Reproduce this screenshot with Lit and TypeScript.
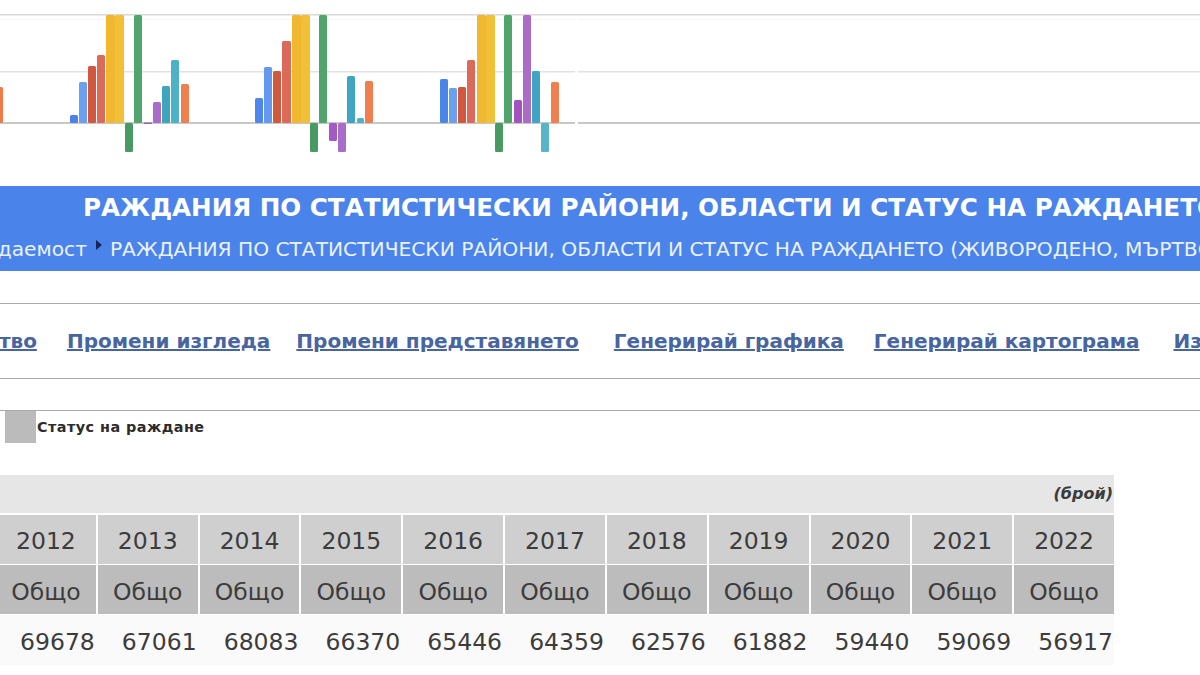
import { LitElement, css, html, svg } from "lit";
import { customElement } from "lit/decorators.js";

const BASE = 123;
const TOP = 15;
const BOTTOM = 152;

// x, width, value end (y), colour. Bars go from the baseline to y.
const BARS: [number, number, number, string][] = [
  [-6, 9, 87, "#f07a4a"],

  [70, 8, 115, "#4f7fe8"],
  [79, 8, 82, "#6ba0f0"],
  [88, 8, 66, "#d2573f"],
  [97, 8, 55, "#dc6a5a"],
  [106, 9, TOP, "#f0b82e"],
  [115, 9, TOP, "#f2c037"],
  [125, 8, BOTTOM, "#489a62"],
  [134, 8, TOP, "#4fa56c"],
  [153, 8, 102, "#a96cc8"],
  [162, 8, 86, "#3ea6bc"],
  [171, 8, 60, "#4db2c6"],
  [181, 8, 84, "#f07f50"],

  [255, 8, 98, "#4f86ea"],
  [264, 8, 67, "#6399ee"],
  [273, 8, 71, "#d2573f"],
  [282, 9, 41, "#dc6a5a"],
  [292, 9, TOP, "#f0b82e"],
  [301, 9, TOP, "#f2c037"],
  [310, 8, BOTTOM, "#489a62"],
  [319, 8, TOP, "#4fa56c"],
  [329, 8, 141, "#a05cc4"],
  [338, 8, BOTTOM, "#a96cc8"],
  [347, 8, 76, "#3ea6c4"],
  [357, 7, 118, "#4db2c6"],
  [365, 8, 81, "#f07f50"],

  [440, 8, 79, "#4a86ea"],
  [449, 8, 88, "#6ba0f0"],
  [458, 8, 87, "#d2573f"],
  [467, 8, 60, "#dc6a5a"],
  [477, 9, TOP, "#f0b82e"],
  [486, 9, TOP, "#f2c037"],
  [495, 8, BOTTOM, "#489a62"],
  [504, 8, TOP, "#4fa56c"],
  [514, 8, 100, "#a353c0"],
  [523, 8, TOP, "#ab6cc8"],
  [532, 8, 71, "#3ea6c4"],
  [541, 8, BOTTOM, "#56b6c6"],
  [551, 8, 82, "#f07f50"],
];

const YEARS = [2012, 2013, 2014, 2015, 2016, 2017, 2018, 2019, 2020, 2021, 2022];
const VALUES = [69678, 67061, 68083, 66370, 65446, 64359, 62576, 61882, 59440, 59069, 56917];

@customElement("app-root")
export class AppRoot extends LitElement {
  static styles = css`
    :host {
      display: block;
      width: 1200px;
      height: 675px;
      overflow: hidden;
      background: #fff;
      font-family: "DejaVu Sans", Verdana, sans-serif;
      color: #333;
    }

    .chart {
      display: block;
      width: 1200px;
      height: 186px;
    }

    .band {
      height: 85px;
      background: #4a84ea;
      color: #fff;
      white-space: nowrap;
      overflow: hidden;
    }

    .title {
      margin: 7px 0 0 83px;
      font-size: 24.6px;
      line-height: 30px;
      font-weight: 700;
    }

    .crumbs {
      display: flex;
      align-items: center;
      gap: 9px;
      margin: 13px 0 0 -45px;
      font-size: 20.2px;
      line-height: 26px;
      color: #eaf2ff;
    }

    .arrow {
      flex: none;
      width: 0;
      height: 0;
      margin: 0 -1px 8px 0;
      border-left: 6px solid #14275a;
      border-top: 5px solid transparent;
      border-bottom: 5px solid transparent;
    }

    .links {
      display: flex;
      align-items: center;
      height: 74px;
      margin-top: 32px;
      border-top: 1px solid #aaa;
      border-bottom: 1px solid #aaa;
      white-space: nowrap;
      overflow: hidden;
    }

    .links a {
      flex: none;
      color: #48659f;
      font-size: 20px;
      font-weight: 700;
      text-decoration: underline;
    }

    .legend {
      display: flex;
      align-items: center;
      height: 32px;
      margin-top: 31px;
      padding: 0 0 0 5px;
      border-top: 1px solid #aaa;
      font-size: 14.4px;
      font-weight: 700;
      letter-spacing: 0.45px;
      color: #2c2c2c;
    }

    .swatch {
      width: 31px;
      height: 32px;
      margin-right: 1px;
      background: #bbb;
    }

    .table {
      display: grid;
      grid-template-columns: repeat(11, 1fr);
      column-gap: 2px;
      row-gap: 1px;
      width: 1118px;
      margin: 32px 0 0 -4px;
      font-size: 23.5px;
      color: #3c3c3c;
    }

    .unit {
      grid-column: 1 / -1;
      height: 38px;
      line-height: 38px;
      margin-bottom: 1px;
      padding-right: 1px;
      text-align: right;
      background: #e6e6e6;
      font-size: 16px;
      font-weight: 700;
      font-style: italic;
    }

    .cell {
      height: 49px;
      line-height: 52px;
      text-align: center;
    }

    .year {
      background: #cfcfcf;
    }

    .total {
      background: #bcbcbc;
      line-height: 55px;
    }

    .value {
      height: 50px;
      line-height: 54px;
      padding-right: 1px;
      text-align: right;
      background: #fafafa;
      box-shadow: 2px 0 0 #fafafa;
    }

    .value:last-child {
      box-shadow: none;
    }
  `;

  private renderChart() {
    return html`<svg class="chart" viewBox="0 0 1200 186">
      <rect x="0" y="14" width="1200" height="1.5" fill="#d8d8d8" />
      <rect x="0" y="19" width="1200" height="1" fill="#f4f4f4" />
      <rect x="0" y="71" width="1200" height="1.5" fill="#e2e2e2" />
      <rect x="0" y="122" width="1200" height="2" fill="#c8c8c8" />
      <rect x="575" y="17" width="3" height="108" fill="#fff" />
      ${BARS.map(([x, w, y, fill]) =>
        svg`<rect x=${x} y=${Math.min(y, BASE)} width=${w} height=${Math.abs(BASE - y)} rx="1.5" fill=${fill} />`
      )}
      <rect x="144" y="122.5" width="8" height="1.5" fill="#9a6a9a" />
    </svg>`;
  }

  render() {
    return html`
      ${this.renderChart()}
      <div class="band">
        <div class="title">РАЖДАНИЯ ПО СТАТИСТИЧЕСКИ РАЙОНИ, ОБЛАСТИ И СТАТУС НА РАЖДАНЕТО</div>
        <div class="crumbs">
          <span>Раждаемост</span><span class="arrow"></span>
          <span>РАЖДАНИЯ ПО СТАТИСТИЧЕСКИ РАЙОНИ, ОБЛАСТИ И СТАТУС НА РАЖДАНЕТО (ЖИВОРОДЕНО, МЪРТВОРОДЕНО)</span>
        </div>
      </div>
      <nav class="links">
        <a style="margin-left:-99px">Количество</a>
        <a style="margin-left:30px">Промени изгледа</a>
        <a style="margin-left:26px">Промени представянето</a>
        <a style="margin-left:35px">Генерирай графика</a>
        <a style="margin-left:30px">Генерирай картограма</a>
        <a style="margin-left:34px">Изтегли</a>
      </nav>
      <div class="legend"><span class="swatch"></span>Статус на раждане</div>
      <div class="table">
        <div class="unit">(брой)</div>
        ${YEARS.map((y) => html`<div class="cell year">${y}</div>`)}
        ${YEARS.map(() => html`<div class="cell total">Общо</div>`)}
        ${VALUES.map((v) => html`<div class="value">${v}</div>`)}
      </div>
    `;
  }
}
